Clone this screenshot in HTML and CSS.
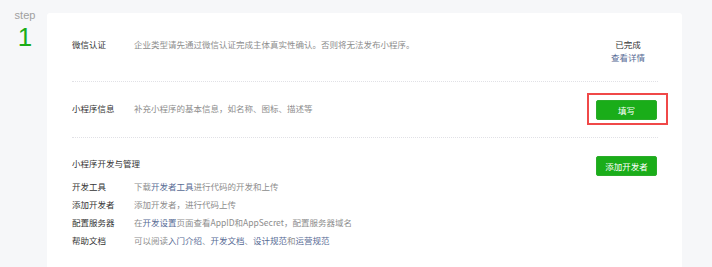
FILE: index.html
```html
<!DOCTYPE html>
<html lang="zh-CN">
<head>
<meta charset="utf-8">
<title>step 1</title>
<link rel="stylesheet" href="styles.css">
</head>
<body>
<div class="page">
  <div class="step">
    <div class="step-label">step</div>
    <div class="step-num">1</div>
  </div>
  <div class="card">
    <div class="row row-auth">
      <div class="label">微信认证</div>
      <div class="desc">企业类型请先通过微信认证完成主体真实性确认。否则将无法发布小程序。</div>
      <div class="status">
        <div class="status-text">已完成</div>
        <a class="link" href="#">查看详情</a>
      </div>
    </div>
    <div class="row row-info">
      <div class="label">小程序信息</div>
      <div class="desc">补充小程序的基本信息，如名称、图标、描述等</div>
      <div class="highlight"><button class="btn">填写</button></div>
    </div>
    <div class="section">
      <div class="section-head">
        <div class="title">小程序开发与管理</div>
        <button class="btn">添加开发者</button>
      </div>
      <ul class="list">
        <li class="item"><span class="label">开发工具</span><span class="desc">下载<a class="link" href="#">开发者工具</a>进行代码的开发和上传</span></li>
        <li class="item"><span class="label">添加开发者</span><span class="desc">添加开发者，进行代码上传</span></li>
        <li class="item"><span class="label">配置服务器</span><span class="desc">在<a class="link" href="#">开发设置</a>页面查看AppID和AppSecret，配置服务器域名</span></li>
        <li class="item"><span class="label">帮助文档</span><span class="desc">可以阅读<a class="link" href="#">入门介绍</a>、<a class="link" href="#">开发文档</a>、<a class="link" href="#">设计规范</a>和<a class="link" href="#">运营规范</a></span></li>
      </ul>
    </div>
  </div>
</div>
</body>
</html>
```

FILE: styles.css
```css
html, body {
  margin: 0;
  padding: 0;
  height: 100%;
}
body {
  background: #f6f7f9;
  font-family: "Noto Sans CJK SC", "Noto Sans", sans-serif;
  font-size: 8.5px;
  color: #353535;
  overflow: hidden;
}
.page {
  display: flex;
  height: 100%;
}
.step {
  width: 47px;
  flex: none;
  display: flex;
  flex-direction: column;
  align-items: center;
  padding-top: 9px;
  padding-left: 3px;
  box-sizing: border-box;
}
.step-label {
  font-family: "Liberation Sans", Arial, sans-serif;
  font-size: 11px;
  line-height: 13px;
  color: #a0a0a0;
}
.step-num {
  font-family: "Liberation Sans", Arial, sans-serif;
  font-weight: 400;
  font-size: 26px;
  line-height: 26px;
  margin-top: 2px;
  color: #1aad19;
}
.card {
  margin-top: 13px;
  width: 635px;
  flex: none;
  background: #fff;
  border-radius: 3px 3px 0 0;
  padding: 0 24px 0 25px;
  box-sizing: border-box;
}
.row {
  display: flex;
  align-items: flex-start;
  border-bottom: 1px dotted #e1e1e6;
}
.label {
  width: 62px;
  flex: none;
  color: #353535;
}
.desc {
  flex: 1;
  color: #8d8d8d;
}
.link {
  color: #576b95;
  text-decoration: none;
}
.row-auth {
  padding: 25px 0 17px;
  line-height: 13px;
}
.status {
  width: 60px;
  flex: none;
  text-align: center;
  display: flex;
  flex-direction: column;
}
.status-text {
  color: #353535;
}
.row-info {
  padding: 18px 1px 17px 0;
  line-height: 16px;
}
.highlight {
  position: relative;
  flex: none;
  display: flex;
}
.highlight::after {
  content: "";
  position: absolute;
  top: -7px;
  bottom: -5px;
  left: -9px;
  right: -11px;
  border: 2px solid #f04848;
}
.btn {
  font-family: "Noto Sans CJK SC", "Noto Sans", sans-serif;
  font-size: 8.5px;
  line-height: 18px;
  height: 20px;
  width: 61px;
  padding: 0;
  border: 1px solid #2bac2a;
  border-radius: 2px;
  background: #1aad19;
  color: #fff;
  flex: none;
}
.section {
  padding-top: 18px;
}
.section-head {
  display: flex;
  justify-content: space-between;
  align-items: flex-start;
  line-height: 14px;
  padding-right: 1px;
}
.title {
  color: #353535;
}
.list {
  list-style: none;
  margin: 1px 0 0;
  padding: 0;
}
.item {
  display: flex;
  line-height: 18px;
}
```
